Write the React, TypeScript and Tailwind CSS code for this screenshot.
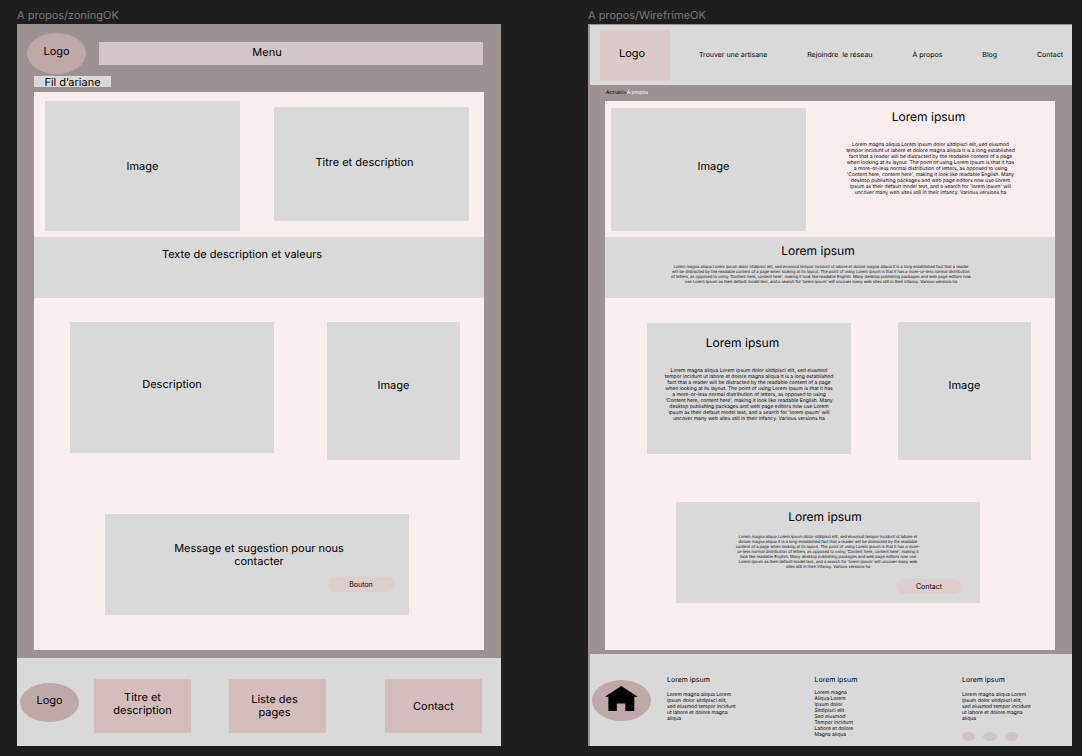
import { Fragment, type ReactNode } from "react";

const introLines = [
  "Lorem magna aliqua Lorem ipsum dolor sitdipisci elit, sed eiusmod",
  "tempor incidunt ut labore et dolore magna aliqua It is a long established",
  "fact that a reader will be distracted by the readable content of a page",
  "when looking at its layout. The point of using Lorem Ipsum is that it has",
  "a more-or-less normal distribution of letters, as opposed to using",
  "'Content here, content here', making it look like readable English. Many",
  "desktop publishing packages and web page editors now use Lorem",
  "Ipsum as their default model text, and a search for 'lorem ipsum' will",
  "uncover many web sites still in their infancy. Various versions ha",
];

const valueLines = [
  "Lorem magna aliqua Lorem ipsum dolor sitdipisci elit, sed eiusmod tempor incidunt ut labore et dolore magna aliqua It is a long established fact that a reader",
  "will be distracted by the readable content of a page when looking at its layout. The point of using Lorem Ipsum is that it has a more-or-less normal distribution",
  "of letters, as opposed to using 'Content here, content here', making it look like readable English. Many desktop publishing packages and web page editors now",
  "use Lorem Ipsum as their default model text, and a search for 'lorem ipsum' will uncover many web sites still in their infancy. Various versions ha",
];

const contactLines = [
  "Lorem magna aliqua Lorem ipsum dolor sitdipisci elit, sed eiusmod tempor incidunt ut labore et",
  "dolore magna aliqua It is a long established fact that a reader will be distracted by the readable",
  "content of a page when looking at its layout. The point of using Lorem Ipsum is that it has a more-",
  "or-less normal distribution of letters, as opposed to using 'Content here, content here', making it",
  "look like readable English. Many desktop publishing packages and web page editors now use",
  "Lorem Ipsum as their default model text, and a search for 'lorem ipsum' will uncover many web",
  "sites still in their infancy. Various versions ha",
];

const footerText = [
  "Lorem magna aliqua Lorem",
  "ipsum dolor sitdipisci elit,",
  "sed eiusmod tempor incidunt",
  "ut labore et dolore magna",
  "aliqua",
];

const footerLinks = [
  "Lorem magna",
  "Aliqua Lorem",
  "Ipsum dolor",
  "Sitdipisci elit",
  "Sed eiusmod",
  "Tempor incidunt",
  "Labore et dolore",
  "Magna aliqua",
];

const navLinks = ["Trouver une artisane", "Rejoindre  le réseau", "À propos", "Blog", "Contact"];

function Lines({ lines, className }: { lines: string[]; className: string }) {
  return (
    <p className={`whitespace-nowrap ${className}`}>
      {lines.map((line, i) => (
        <Fragment key={line}>
          {i > 0 && <br />}
          {line}
        </Fragment>
      ))}
    </p>
  );
}

function Zone({ className, children }: { className: string; children: ReactNode }) {
  return (
    <div className={`flex items-center justify-center text-center text-[11px] leading-[13px] ${className}`}>
      {children}
    </div>
  );
}

function Artboard({ name, children }: { name: string; children: ReactNode }) {
  return (
    <section className="min-w-0">
      <h2 className="h-6 pt-[7px] text-[11px] leading-4 text-[#7b7b7b]">{name}</h2>
      <div className="flex min-h-[722px] flex-col bg-[#9c9292]">{children}</div>
    </section>
  );
}

function Zoning() {
  return (
    <Artboard name="A propos/zoningOK">
      <header className="flex items-center gap-[13px] pr-[18px] pl-[10px] pt-[9px]">
        <Zone className="h-[41px] w-[59px] shrink-0 rounded-[50%] bg-[#bea8a8] pb-[4px]">Logo</Zone>
        <Zone className="h-[23px] flex-1 bg-[#d3c6c6] pr-[48px] pb-[2px]">Menu</Zone>
      </header>
      <Zone className="mt-[2px] ml-[17px] h-[11px] w-[77px] bg-[#d9d9d9] pt-[2px]">Fil d’ariane</Zone>
      <main className="mx-[17px] mt-[5px] flex flex-1 flex-col bg-[#f8eeed]">
        <div className="grid grid-cols-2 gap-[34px] pt-[9px] pr-[15px] pb-[6px] pl-[11px]">
          <Zone className="h-[130px] bg-[#d9d9d9]">Image</Zone>
          <Zone className="mt-[6px] h-[114px] bg-[#d9d9d9] pr-[14px] pb-[4px]">Titre et description</Zone>
        </div>
        <div className="h-[61px] bg-[#d9d9d9] pt-[11px] pr-[34px] text-center text-[11px] leading-[13px]">
          Texte de description et valeurs
        </div>
        <div className="flex gap-[53px] pt-[24px] pr-[24px] pl-[36px]">
          <Zone className="h-[131px] flex-[204] bg-[#d9d9d9] pb-[6px]">Description</Zone>
          <Zone className="h-[138px] flex-[133] bg-[#d9d9d9] pb-[12px]">Image</Zone>
        </div>
        <div className="mt-[54px] mr-[75px] mb-[35px] ml-[71px] flex h-[101px] flex-col bg-[#d9d9d9] px-[15px] pt-[28px]">
          <p className="px-[40px] pl-[44px] text-center text-[11px] leading-[13px]">
            Message et sugestion pour nous contacter
          </p>
          <button type="button" className="mt-[9px] h-[15px] w-[66px] self-end rounded-full bg-[#dfcece] text-[7px] leading-[9px]">
            Bouton
          </button>
        </div>
      </main>
      <footer className="mt-[8px] flex h-[88px] items-center bg-[#d9d9d9] pr-[19px] pl-[3px]">
        <Zone className="h-[39px] w-[59px] rounded-[50%] bg-[#bea8a8] pb-[3px]">Logo</Zone>
        <Zone className="mt-[8px] ml-[15px] h-[54px] w-[97px] bg-[#d3bdbd] px-[12px] pb-[4px]">Titre et description</Zone>
        <Zone className="mt-[8px] ml-[38px] h-[54px] w-[97px] bg-[#d3bdbd] pr-[26px] pl-[20px]">Liste des pages</Zone>
        <Zone className="mt-[8px] ml-auto h-[54px] w-[97px] bg-[#d3bdbd]">Contact</Zone>
      </footer>
    </Artboard>
  );
}

function FooterColumn({ children }: { children: ReactNode }) {
  return (
    <div className="flex-1">
      <h3 className="text-[7px] leading-[9px]">Lorem ipsum</h3>
      {children}
    </div>
  );
}

function Wireframe() {
  return (
    <Artboard name="A propos/WirefrimeOK">
      <header className="mt-[1px] ml-[2px] flex h-[60px] items-center bg-[#d9d9d9] pr-[9px] pl-[10px]">
        <Zone className="h-[51px] w-[70px] shrink-0 bg-[#dccaca] pr-[6px] pb-[4px]">Logo</Zone>
        <nav className="ml-[29px] flex flex-1 justify-between pb-[1px] text-[7px] leading-[9px]">
          {navLinks.map((label) => (
            <a key={label} href="#" className="whitespace-pre">
              {label}
            </a>
          ))}
        </nav>
      </header>
      <nav aria-label="Fil d’ariane" className="ml-[18px] flex h-[16px] items-center text-[5px] leading-[6px]">
        <a href="#">Accueil&gt;</a>
        <a href="#" className="text-white">À propos</a>
      </nav>
      <main className="mx-[17px] flex flex-1 flex-col bg-[#f8eeed]">
        <div className="flex pt-[7px] pb-[6px] pl-[6px]">
          <Zone className="h-[123px] w-[195px] bg-[#d9d9d9] pb-[6px] pl-[10px]">Image</Zone>
          <div className="flex-1 text-center">
            <h1 className="pt-[1px] pr-[4px] text-[12px] leading-[16px]">Lorem ipsum</h1>
            <Lines lines={introLines} className="mt-[17px] text-[5px] leading-[6px]" />
          </div>
        </div>
        <div className="h-[61px] bg-[#d9d9d9] pt-[6px] pr-[18px] text-center">
          <h2 className="pr-[6px] text-[12px] leading-[16px]">Lorem ipsum</h2>
          <Lines lines={valueLines} className="mt-[5px] text-[4px] leading-[5px]" />
        </div>
        <div className="flex gap-[47px] pt-[24px] pr-[24px] pl-[42px]">
          <div className="mt-[1px] h-[131px] flex-[204] bg-[#d9d9d9] pt-[12px] text-center">
            <h2 className="pr-[13px] text-[12px] leading-[16px]">Lorem ipsum</h2>
            <Lines lines={introLines} className="mt-[17px] text-[5px] leading-[6px]" />
          </div>
          <Zone className="h-[138px] flex-[133] bg-[#d9d9d9] pb-[12px]">Image</Zone>
        </div>
        <div className="mt-[42px] mr-[75px] mb-[47px] ml-[71px] flex h-[101px] flex-col bg-[#d9d9d9] px-[18px] pt-[7px] text-center">
          <h2 className="pr-[6px] text-[12px] leading-[16px]">Lorem ipsum</h2>
          <Lines lines={contactLines} className="mt-[9px] text-[4px] leading-[5px]" />
          <button type="button" className="mt-[10px] h-[15px] w-[66px] self-end rounded-full bg-[#dfcece] text-[7px] leading-[9px]">
            Contact
          </button>
        </div>
      </main>
      <footer className="mt-[4px] ml-[2px] flex h-[92px] bg-[#d9d9d9] pt-[21px] pl-[2px]">
        <div className="mt-[5px] mr-[16px] flex h-[41px] w-[59px] shrink-0 items-center justify-center rounded-[50%] bg-[#bea8a8]">
          <svg viewBox="0 0 33 25" className="mb-[4px] h-[25px] w-[33px]" role="img" aria-label="Accueil">
            <path d="M16.3 0 32.8 10.8H29.3V25H20.3V17.5H11.8V25H3.4V10.8H0z" fill="#000" />
          </svg>
        </div>
        <FooterColumn>
          <Lines lines={footerText} className="mt-[8px] text-[5px] leading-[6px]" />
        </FooterColumn>
        <FooterColumn>
          <ul className="mt-[6px] text-[5px] leading-[6px]">
            {footerLinks.map((label) => (
              <li key={label}>
                <a href="#">{label}</a>
              </li>
            ))}
          </ul>
        </FooterColumn>
        <div className="w-[110px] shrink-0">
          <h3 className="text-[7px] leading-[9px]">Lorem ipsum</h3>
          <Lines lines={footerText} className="mt-[8px] text-[5px] leading-[6px]" />
          <div className="mt-[10px] flex gap-[8px]">
            <span className="h-[9px] w-[13px] rounded-[50%] bg-[#d3c3c3]" />
            <span className="h-[9px] w-[14px] rounded-[50%] bg-[#d3c3c3]" />
            <span className="h-[9px] w-[13px] rounded-[50%] bg-[#d3c3c3]" />
          </div>
        </div>
      </footer>
    </Artboard>
  );
}

export default function App() {
  return (
    <div className="grid min-h-screen grid-cols-2 gap-[87px] bg-[#1e1e1e] pr-[10px] pl-[17px] font-['Inter',sans-serif] text-black [text-rendering:geometricPrecision]">
      <Zoning />
      <Wireframe />
    </div>
  );
}
